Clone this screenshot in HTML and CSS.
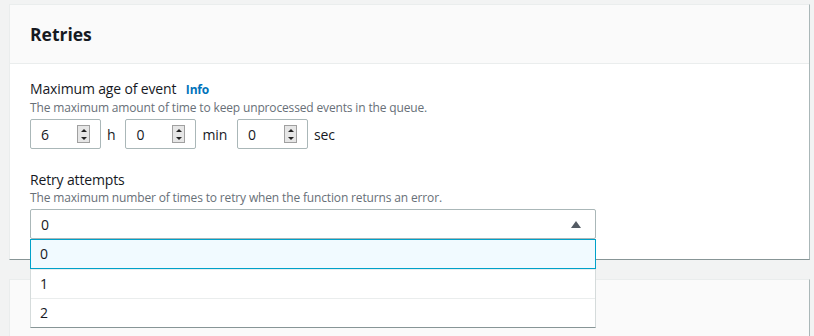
FILE: index.html
```html
<!DOCTYPE html>
<html lang="en">
<head>
  <meta charset="UTF-8" />
  <title>Retries</title>
  <link rel="stylesheet" href="styles.css">
</head>
<body>
  <div class="page">
    <div class="card">
      <div class="card-header">
        <h2>Retries</h2>
      </div>
      <div class="card-body">
        <div class="field">
          <div class="label">Maximum age of event <a class="info">Info</a></div>
          <div class="desc">The maximum amount of time to keep unprocessed events in the queue.</div>
          <div class="time-row">
            <div class="num-input"><span>6</span><span class="spin"><i class="up"></i><i class="down"></i></span></div>
            <span class="unit">h</span>
            <div class="num-input"><span>0</span><span class="spin"><i class="up"></i><i class="down"></i></span></div>
            <span class="unit">min</span>
            <div class="num-input"><span>0</span><span class="spin"><i class="up"></i><i class="down"></i></span></div>
            <span class="unit">sec</span>
          </div>
        </div>
        <div class="field field-retry">
          <div class="label">Retry attempts</div>
          <div class="desc">The maximum number of times to retry when the function returns an error.</div>
          <div class="select-wrap">
            <div class="select"><span>0</span><span class="caret"></span></div>
            <ul class="dropdown">
              <li class="active">0</li>
              <li>1</li>
              <li>2</li>
            </ul>
          </div>
        </div>
      </div>
    </div>
    <div class="card card-next"></div>
  </div>
</body>
</html>
```

FILE: styles.css
```css
body {
  margin: 0;
  background: #f2f3f3;
  font-family: 'Open Sans', Roboto, Arial, sans-serif;
  color: #16191f;
  overflow: hidden;
}
.page {
  padding: 4px 3px 0 9px;
}
.card {
  background: #fff;
  border: 1px solid #eaeded;
  border-right-color: #aab7b8;
  border-bottom-color: #879596;
  width: 799px;
}
.card-header {
  background: #fafafa;
  border-bottom: 1px solid #eaeded;
  height: 58px;
  padding: 0 20px;
  display: flex;
  align-items: center;
}
.card-header h2 {
  margin: 0;
  font-size: 17.5px;
  font-weight: 700;
}
.card-body {
  padding: 15px 20px 20px;
  height: 160px;
  letter-spacing: -0.15px;
}
.label {
  font-size: 14px;
  line-height: 20px;
}
.info {
  color: #0073bb;
  font-weight: 700;
  font-size: 12px;
  margin-left: 6px;
}
.desc {
  font-size: 12px;
  color: #687078;
  line-height: 15px;
}
.time-row {
  display: flex;
  align-items: center;
  margin-top: 4px;
}
.num-input {
  width: 71px;
  height: 30px;
  box-sizing: border-box;
  border: 1px solid #aab7b8;
  border-radius: 2px;
  display: flex;
  align-items: center;
  justify-content: space-between;
  padding: 0 10px 0 10px;
  font-size: 14px;
}
.spin {
  width: 11px;
  height: 16px;
  border: 1px solid #a0a0a0;
  background: #e6e6e6;
  display: flex;
  flex-direction: column;
  align-items: center;
  justify-content: space-around;
}
.spin i {
  width: 0;
  height: 0;
  border-left: 3px solid transparent;
  border-right: 3px solid transparent;
}
.spin .up {
  border-bottom: 3px solid #222;
}
.spin .down {
  border-top: 3px solid #222;
}
.unit {
  font-size: 14px;
  padding: 0 10px 0 6px;
}
.field-retry {
  margin-top: 21px;
}
.select-wrap {
  position: relative;
  width: 566px;
  margin-top: 4px;
}
.select {
  height: 30px;
  box-sizing: border-box;
  border: 1px solid #aab7b8;
  border-radius: 2px;
  display: flex;
  align-items: center;
  justify-content: space-between;
  padding: 0 14px 0 10px;
  font-size: 14px;
}
.caret {
  width: 0;
  height: 0;
  border-left: 5px solid transparent;
  border-right: 5px solid transparent;
  border-bottom: 7px solid #545b64;
}
.dropdown {
  position: absolute;
  top: 30px;
  left: 0;
  right: 0;
  margin: 0;
  padding: 0;
  list-style: none;
  background: #fff;
  border: 1px solid #d5dbdb;
  border-top: none;
  border-bottom-color: #879596;
  font-size: 14px;
  z-index: 2;
}
.dropdown li {
  height: 28px;
  line-height: 28px;
  padding: 0 9px;
  border-top: 1px solid #eaeded;
}
.dropdown li.active {
  border: 1px solid #00a1c9;
  background: #f1faff;
  height: 28px;
  line-height: 28px;
  margin: 0 -1px;
}
.card-next {
  margin-top: 19px;
  background: #fafafa;
  height: 80px;
  border-bottom: none;
}
```
